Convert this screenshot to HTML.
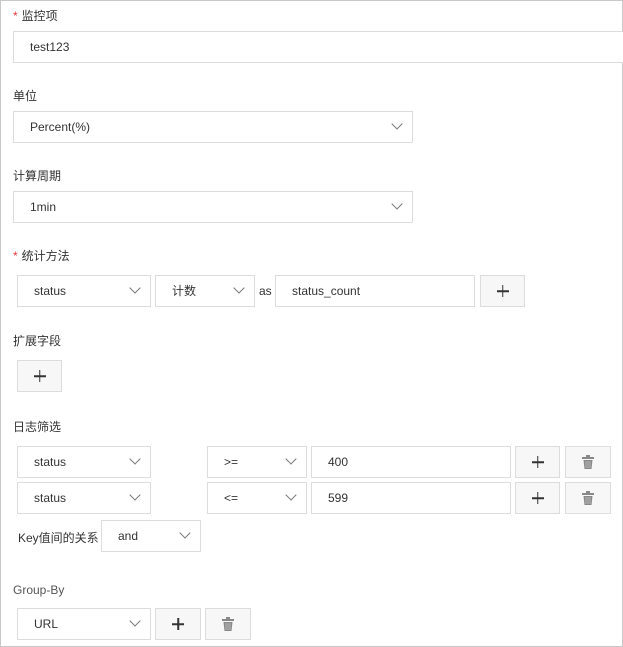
<!DOCTYPE html><html><head><style>
body{margin:0;width:623px;height:647px;position:relative;font-family:"Liberation Sans","Noto Sans CJK SC",sans-serif;font-size:12px;color:#333;background:#fff;overflow:hidden}
.frame{position:absolute;left:0;top:0;width:621px;height:645px;border:1px solid #c8c8c8}
.a{position:absolute}
.lbl{position:absolute;left:13px;font-size:12px;color:#333;line-height:16px}
.lbl i{color:#e4393c;font-style:normal;margin-right:4px}
.box{position:absolute;border:1px solid #dcdcdc;box-sizing:border-box;background:#fff;line-height:31px;padding-left:16px}
.sel::after{content:"";position:absolute;right:11px;top:8px;width:7px;height:7px;border-right:1.2px solid #777;border-bottom:1.2px solid #777;transform:rotate(45deg)}
.btn{position:absolute;border:1px solid #dcdcdc;box-sizing:border-box;background:#f7f7f7}
.plus::before{content:"";position:absolute;left:50%;top:50%;width:12px;height:1.5px;background:#333;transform:translate(-50%,-50%)}
.plus::after{content:"";position:absolute;left:50%;top:50%;width:1.5px;height:12px;background:#333;transform:translate(-50%,-50%)}
</style></head><body>
<div class="frame"></div>
<div class="lbl" style="top:8px"><i>*</i>监控项</div>
<div class="box" style="left:13px;top:31px;width:612px;height:32px">test123</div>
<div class="lbl" style="top:88px">单位</div>
<div class="box sel" style="left:13px;top:111px;width:400px;height:32px">Percent(%)</div>
<div class="lbl" style="top:168px">计算周期</div>
<div class="box sel" style="left:13px;top:191px;width:400px;height:32px">1min</div>
<div class="lbl" style="top:248px"><i>*</i>统计方法</div>
<div class="box sel" style="left:17px;top:275px;width:134px;height:32px">status</div>
<div class="box sel" style="left:155px;top:275px;width:100px;height:32px">计数</div>
<div class="a" style="left:259px;top:284px">as</div>
<div class="box" style="left:275px;top:275px;width:200px;height:32px">status_count</div>
<div class="btn plus" style="left:480px;top:275px;width:45px;height:32px"></div>
<div class="lbl" style="top:333px">扩展字段</div>
<div class="btn plus" style="left:17px;top:360px;width:45px;height:32px"></div>
<div class="lbl" style="top:419px">日志筛选</div>
<div class="box sel" style="left:17px;top:446px;width:134px;height:32px">status</div>
<div class="box sel" style="left:207px;top:446px;width:100px;height:32px">&gt;=</div>
<div class="box" style="left:311px;top:446px;width:200px;height:32px">400</div>
<div class="btn plus" style="left:515px;top:446px;width:45px;height:32px"></div>
<div class="btn" style="left:565px;top:446px;width:46px;height:32px"><svg class="a" style="left:16px;top:8px" width="12" height="14" viewBox="0 0 12 14"><rect x="0" y="2" width="12" height="2" fill="#888"/><rect x="4" y="0" width="4" height="2" fill="#888"/><path d="M1.5 5h9l-1 9h-7z" fill="#888"/><path d="M4 6v7M6 6v7M8 6v7" stroke="#ccc" stroke-width=".7"/></svg></div>
<div class="box sel" style="left:17px;top:482px;width:134px;height:32px">status</div>
<div class="box sel" style="left:207px;top:482px;width:100px;height:32px">&lt;=</div>
<div class="box" style="left:311px;top:482px;width:200px;height:32px">599</div>
<div class="btn plus" style="left:515px;top:482px;width:45px;height:32px"></div>
<div class="btn" style="left:565px;top:482px;width:46px;height:32px"><svg class="a" style="left:16px;top:8px" width="12" height="14" viewBox="0 0 12 14"><rect x="0" y="2" width="12" height="2" fill="#888"/><rect x="4" y="0" width="4" height="2" fill="#888"/><path d="M1.5 5h9l-1 9h-7z" fill="#888"/><path d="M4 6v7M6 6v7M8 6v7" stroke="#ccc" stroke-width=".7"/></svg></div>
<div class="a" style="left:18px;top:529px">Key值间的关系</div>
<div class="box sel" style="left:101px;top:520px;width:100px;height:32px">and</div>
<div class="lbl" style="top:582px;color:#555">Group-By</div>
<div class="box sel" style="left:17px;top:608px;width:134px;height:32px">URL</div>
<div class="btn plus" style="left:155px;top:608px;width:46px;height:32px"></div>
<div class="btn" style="left:205px;top:608px;width:46px;height:32px"><svg class="a" style="left:16px;top:8px" width="12" height="14" viewBox="0 0 12 14"><rect x="0" y="2" width="12" height="2" fill="#888"/><rect x="4" y="0" width="4" height="2" fill="#888"/><path d="M1.5 5h9l-1 9h-7z" fill="#888"/><path d="M4 6v7M6 6v7M8 6v7" stroke="#ccc" stroke-width=".7"/></svg></div>
</body></html>
